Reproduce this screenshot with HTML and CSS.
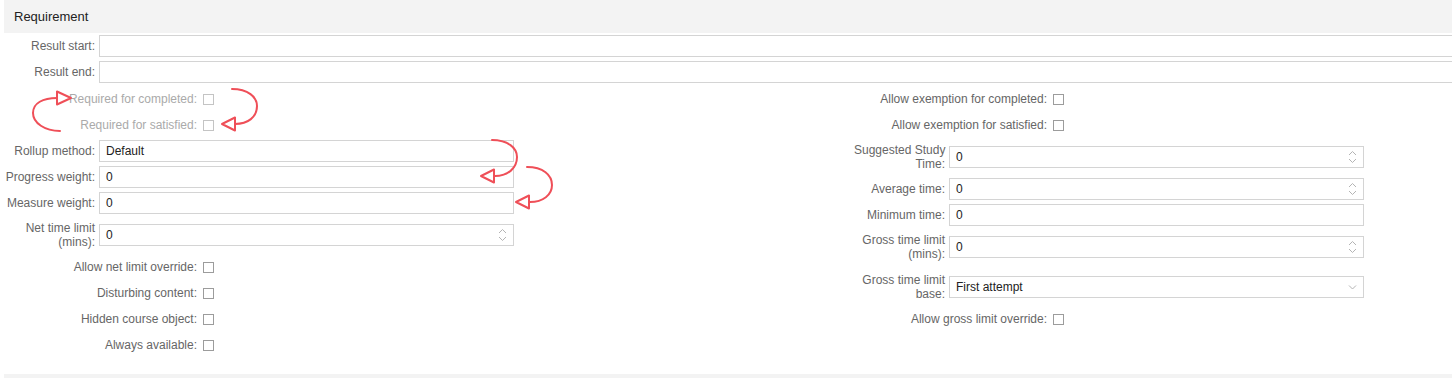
FILE: index.html
```html
<!DOCTYPE html>
<html lang="en">
<head>
    <meta charset="UTF-8">
    <title>Requirement</title>
    <link rel="stylesheet" href="styles.css">
</head>
<body>
    <div class="panel">
        <div class="panel-head">Requirement</div>

        <div class="row wide">
            <label>Result start:</label>
            <div class="field"></div>
        </div>
        <div class="row wide">
            <label>Result end:</label>
            <div class="field"></div>
        </div>

        <div class="cols">
            <div class="col">
                <div class="row check off">
                    <label>Required for completed:</label>
                    <span class="box"></span>
                </div>
                <div class="row check off">
                    <label>Required for satisfied:</label>
                    <span class="box"></span>
                </div>
                <div class="row">
                    <label>Rollup method:</label>
                    <div class="field"><span class="val">Default</span></div>
                </div>
                <div class="row">
                    <label>Progress weight:</label>
                    <div class="field"><span class="val">0</span></div>
                </div>
                <div class="row">
                    <label>Measure weight:</label>
                    <div class="field"><span class="val">0</span></div>
                </div>
                <div class="row tall">
                    <label>Net time limit<br>(mins):</label>
                    <div class="field">
                        <span class="val">0</span>
                        <svg class="spin" width="9" height="14" viewBox="0 0 9 14"><path d="M1 5 L4.5 1.5 L8 5 M1 9 L4.5 12.5 L8 9"/></svg>
                    </div>
                </div>
                <div class="row check">
                    <label>Allow net limit override:</label>
                    <span class="box"></span>
                </div>
                <div class="row check">
                    <label>Disturbing content:</label>
                    <span class="box"></span>
                </div>
                <div class="row check">
                    <label>Hidden course object:</label>
                    <span class="box"></span>
                </div>
                <div class="row check">
                    <label>Always available:</label>
                    <span class="box"></span>
                </div>
            </div>

            <div class="col">
                <div class="row check">
                    <label>Allow exemption for completed:</label>
                    <span class="box"></span>
                </div>
                <div class="row check">
                    <label>Allow exemption for satisfied:</label>
                    <span class="box"></span>
                </div>
                <div class="row tall">
                    <label>Suggested Study<br>Time:</label>
                    <div class="field">
                        <span class="val">0</span>
                        <svg class="spin" width="9" height="14" viewBox="0 0 9 14"><path d="M1 5 L4.5 1.5 L8 5 M1 9 L4.5 12.5 L8 9"/></svg>
                    </div>
                </div>
                <div class="row">
                    <label>Average time:</label>
                    <div class="field">
                        <span class="val">0</span>
                        <svg class="spin" width="9" height="14" viewBox="0 0 9 14"><path d="M1 5 L4.5 1.5 L8 5 M1 9 L4.5 12.5 L8 9"/></svg>
                    </div>
                </div>
                <div class="row">
                    <label>Minimum time:</label>
                    <div class="field"><span class="val">0</span></div>
                </div>
                <div class="row tall">
                    <label>Gross time limit<br>(mins):</label>
                    <div class="field">
                        <span class="val">0</span>
                        <svg class="spin" width="9" height="14" viewBox="0 0 9 14"><path d="M1 5 L4.5 1.5 L8 5 M1 9 L4.5 12.5 L8 9"/></svg>
                    </div>
                </div>
                <div class="row tall sel">
                    <label>Gross time limit<br>base:</label>
                    <div class="field">
                        <span class="val">First attempt</span>
                        <svg class="spin" width="9" height="14" viewBox="0 0 9 14"><path d="M1 5.5 L4.5 9 L8 5.5"/></svg>
                    </div>
                </div>
                <div class="row check">
                    <label>Allow gross limit override:</label>
                    <span class="box"></span>
                </div>
            </div>
        </div>

        <div class="panel-foot"></div>
    </div>

    <!-- hand-drawn review marks over the form -->
    <svg class="marks" width="600" height="220" viewBox="0 0 600 220">
        <path d="M60 131 C45 131 33 123 33 113 C33 103 43 98 57 98"/>
        <polygon points="57,91.5 57,104.5 71,98"/>
        <path d="M232 89 C248 89 257 97 257 106 C257 117 248 124 235 124"/>
        <polygon points="222,124 235,117.5 235,130.5"/>
        <path d="M492 140 C508 140 517 148 517 157 C517 168 508 176 495 176"/>
        <polygon points="481,176 494,169.5 494,182.5"/>
        <path d="M527 167 C543 167 552 175 552 185 C552 195 543 202 530 202"/>
        <polygon points="516,202 529,195.5 529,208.5"/>
    </svg>
</body>
</html>
```

FILE: styles.css
```css
html, body { overflow: hidden; }
body { margin: 0; font-family: "Liberation Sans", Arial, sans-serif; font-size: 12px; color: #666; background: #fff; }
.panel { margin-left: 4px; }
.panel-head { height: 33px; line-height: 33px; padding-left: 10px; background: #f3f3f3; color: #222; font-size: 13px; }
.panel-foot { height: 6px; margin-top: 16px; background: #f3f3f3; }

.row { display: flex; align-items: center; height: 26px; }
.row label { width: 91px; margin-right: 4px; text-align: right; line-height: 14px; white-space: nowrap; flex-shrink: 0; }
.row.tall { height: 38px; }
.row.sel { margin-top: 2px; }
.row.check label { width: 193px; margin-right: 6px; }
.row.off label { color: #aaa; }

.field { width: 415px; height: 22px; box-sizing: border-box; border: 1px solid #d4d4d4; background: #fff; display: flex; align-items: center; padding: 0 6px 0 6px; color: #222; }
.wide .field { width: 1370px; flex-shrink: 0; }
.field .val { flex: 1; }
.spin { fill: none; stroke: #b4b4b4; stroke-width: 1; }

.box { width: 11px; height: 11px; box-sizing: border-box; border: 1px solid #9c9c9c; background: #fff; }
.off .box { border-color: #c4c4c4; }

.cols { display: grid; grid-template-columns: 850px 1fr; padding-top: 1px; }

.marks { position: absolute; left: 0; top: 0; pointer-events: none; }
.marks path { fill: none; stroke: #ef4f58; stroke-width: 2; stroke-linecap: round; }
.marks polygon { fill: #fff; stroke: #ef4f58; stroke-width: 2; stroke-linejoin: round; }
```
